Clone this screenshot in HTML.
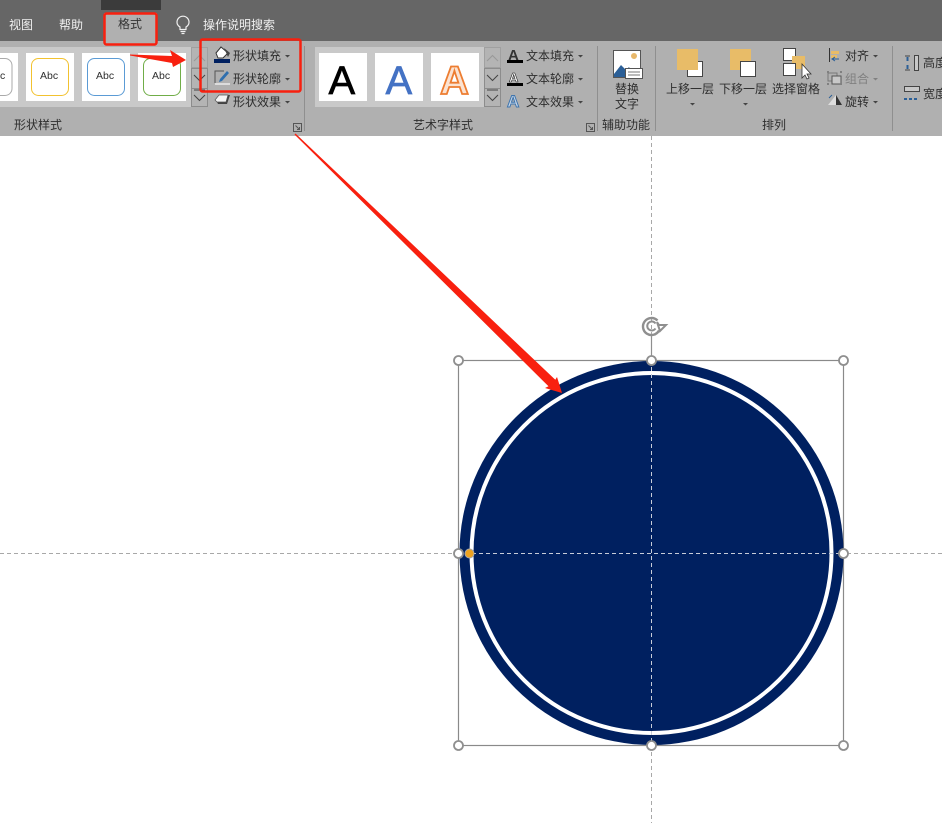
<!DOCTYPE html>
<html>
<head>
<meta charset="utf-8">
<style>
html,body{margin:0;padding:0;background:#fff;width:942px;height:823px;overflow:hidden}
svg{display:block}
text{font-family:"Liberation Sans","Noto Sans CJK SC",sans-serif;fill:#2e2e2e;font-size:12px}
</style>
</head>
<body>
<svg width="942" height="823" viewBox="0 0 942 823" xmlns="http://www.w3.org/2000/svg">
<rect width="942" height="823" fill="#fff"/>
<!-- tab bar -->
<rect width="942" height="41" fill="#666666"/>
<rect x="101" y="0" width="60" height="10" fill="#3b3b3b"/>
<rect x="0" y="41" width="942" height="95" fill="#b0b0b0"/>
<rect x="104" y="13" width="53" height="31" fill="#b0b0b0"/>
<text x="9" y="29" style="fill:#f0f0f0">视图</text>
<text x="59" y="29" style="fill:#f0f0f0">帮助</text>
<text x="203" y="29" style="fill:#f0f0f0">操作说明搜索</text>
<text x="118" y="28" style="fill:#333">格式</text>
<!-- bulb -->
<path d="M180 29.500v-2.500c-2-1.200-3-2.800-3-4.800a6 6 0 0 1 12 0c0 2-1 3.600-3 4.800v2.500z" fill="none" stroke="#f0f0f0" stroke-width="1.200"/>
<path d="M180.500 31.500h5M181.500 33.500h3" stroke="#f0f0f0" stroke-width="1.200"/>

<!-- shape gallery -->
<rect x="0" y="47" width="191" height="60" fill="#c9c9c9"/>
<rect x="0" y="53" width="18" height="48" fill="#fff"/>
<rect x="26" y="53" width="48" height="48" fill="#fff"/>
<rect x="82" y="53" width="48" height="48" fill="#fff"/>
<rect x="138" y="53" width="48" height="48" fill="#fff"/>
<rect x="-20" y="58.500" width="32" height="37" rx="7" fill="#fff" stroke="#aaa"/>
<rect x="31.500" y="58.500" width="37" height="37" rx="7" fill="#fff" stroke="#f2c230"/>
<rect x="87.500" y="58.500" width="37" height="37" rx="7" fill="#fff" stroke="#5b9bd5"/>
<rect x="143.500" y="58.500" width="37" height="37" rx="7" fill="#fff" stroke="#70ad47"/>
<text x="0" y="79" style="font-size:10.500px">c</text>
<text x="40" y="79" style="font-size:10.500px">Abc</text>
<text x="96" y="79" style="font-size:10.500px">Abc</text>
<text x="152" y="79" style="font-size:10.500px">Abc</text>
<!-- gallery scroll -->
<g fill="#b4b4b4" stroke="#8c8c8c">
<rect x="191.500" y="47.500" width="16" height="20" fill="#b4b4b4" stroke="#a0a0a0"/>
<rect x="191.500" y="68.500" width="16" height="20"/>
<rect x="191.500" y="88.500" width="16" height="18"/>
</g>
<path d="M194 61l5.500-5.500 5.500 5.500" fill="none" stroke="#999" stroke-width="1"/>
<path d="M194 75l5.500 5.500 5.500-5.500M194 95l5.500 5.500 5.500-5.500M194 90h11" fill="none" stroke="#444" stroke-width="1"/>
<!-- shape commands -->
<path d="M216 53l5-6 7 6-5 5h-5z" fill="#fff" stroke="#333"/>
<path d="M224 48l6 5-2 4z" fill="#444"/>
<rect x="214" y="59" width="16" height="4" fill="#002060"/>
<path d="M224 71h-9v12" fill="none" stroke="#555"/>
<path d="M219 82l1-3 7-8 2 2-7 8z" fill="#2f6fae"/>
<rect x="215" y="83" width="15" height="2" fill="#dcdcdc"/>
<path d="M216 100l4-5h10l-3 9h-9z" fill="#444"/>
<path d="M215 100l4-5h9l-2 7h-9z" fill="#f5f5f5" stroke="#555" stroke-width=".7"/>
<text x="233" y="60">形状填充</text>
<text x="233" y="83">形状轮廓</text>
<text x="233" y="106">形状效果</text>
<path d="M285 55h5l-2.500 2.500zM285 78h5l-2.500 2.500zM285 101h5l-2.500 2.500z" fill="#444"/>
<text x="14" y="129">形状样式</text>
<path d="M293.500 123.500h8v8h-8z M295.500 125.500l4 4M299.500 127v2.500H297" fill="none" stroke="#555" stroke-width="1"/>
<path d="M304.500 46v85" stroke="#8f8f8f"/>

<!-- WordArt gallery -->
<rect x="315" y="47" width="169" height="60" fill="#c9c9c9"/>
<rect x="319" y="53" width="48" height="48" fill="#fff"/>
<rect x="375" y="53" width="48" height="48" fill="#fff"/>
<rect x="431" y="53" width="48" height="48" fill="#fff"/>
<text x="328.500" y="94" style="font-size:40px;fill:#000;stroke:#000;stroke-width:.7px">A</text>
<text x="385.500" y="94" style="font-size:40px;fill:#4472c4;stroke:#4472c4;stroke-width:.7px">A</text>
<text x="440" y="94" style="font-size:40px;fill:#fbe3d2;stroke:#ed7d31;stroke-width:1.800px;font-weight:bold">A</text>
<g stroke="#8c8c8c" fill="#b4b4b4">
<rect x="484.500" y="47.500" width="16" height="20" fill="#b4b4b4" stroke="#a0a0a0"/>
<rect x="484.500" y="68.500" width="16" height="20"/>
<rect x="484.500" y="88.500" width="16" height="18"/>
</g>
<path d="M487 61l5.500-5.500 5.500 5.500" fill="none" stroke="#999"/>
<path d="M487 75l5.500 5.500 5.500-5.500M487 95l5.500 5.500 5.500-5.500M487 90h11" fill="none" stroke="#444"/>
<!-- text commands -->
<text x="508" y="60" style="font-size:15px;font-weight:bold;fill:#333">A</text>
<rect x="507" y="60" width="16" height="3" fill="#000"/>
<text x="509" y="82" style="font-size:13px;font-weight:bold;fill:#fff;stroke:#222;stroke-width:.6px">A</text>
<rect x="507" y="83" width="16" height="3" fill="#000"/>
<text x="507" y="107" style="font-size:17px;font-weight:bold;fill:#c7d6e8;stroke:#3f75ad;stroke-width:1px">A</text>
<text x="526" y="60">文本填充</text>
<text x="526" y="83">文本轮廓</text>
<text x="526" y="106">文本效果</text>
<path d="M578 55h5l-2.500 2.500zM578 78h5l-2.500 2.500zM578 101h5l-2.500 2.500z" fill="#444"/>
<text x="413" y="129">艺术字样式</text>
<path d="M586.500 123.500h8v8h-8z M588.500 125.500l4 4M592.500 127v2.500H590" fill="none" stroke="#555"/>
<path d="M597.500 46v85" stroke="#8f8f8f"/>

<!-- alt text -->
<rect x="613.500" y="50.500" width="27" height="27" fill="#fff" stroke="#555"/>
<circle cx="634" cy="56" r="3" fill="#e8b86b"/>
<path d="M614 74l7-9 5 5 3-3 6 10h-21z" fill="#2b5f97"/>
<rect x="625.500" y="68.500" width="17" height="10" fill="#fff" stroke="#555"/>
<path d="M628 72h12M628 75h12" stroke="#777"/>
<text x="615" y="93">替换</text>
<text x="615" y="108">文字</text>
<text x="602" y="129">辅助功能</text>
<path d="M655.500 46v85" stroke="#8f8f8f"/>

<!-- arrange -->
<rect x="687.500" y="61.500" width="15" height="15" fill="#fff" stroke="#444"/>
<rect x="677" y="49" width="21" height="21" fill="#e8bc68"/>
<text x="666" y="93">上移一层</text>
<path d="M690 103h5l-2.500 2.500z" fill="#444"/>
<rect x="730" y="49" width="21" height="21" fill="#e8bc68"/>
<rect x="740.500" y="61.500" width="15" height="15" fill="#fff" stroke="#444"/>
<text x="719" y="93">下移一层</text>
<path d="M743 103h5l-2.500 2.500z" fill="#444"/>
<rect x="783.500" y="48.500" width="12" height="12" fill="#fff" stroke="#444"/>
<rect x="792" y="56" width="13" height="13" fill="#e8bc68"/>
<rect x="783.500" y="63.500" width="12" height="12" fill="#fff" stroke="#444"/>
<path d="M802 64v14l3-3 2 4 2-1-2-4h4z" fill="#fff" stroke="#333" stroke-width=".8"/>
<text x="772" y="93">选择窗格</text>
<path d="M829.500 48v14" stroke="#333"/>
<rect x="831" y="51" width="8" height="3" fill="#e8bc68"/>
<rect x="831" y="55" width="6" height="3" fill="#e8bc68"/>
<path d="M839 59h-7m3-2l-3 2 3 2" fill="none" stroke="#2b5f97"/>
<text x="845" y="60">对齐</text>
<path d="M873 55h5l-2.500 2.500z" fill="#444"/>
<rect x="828" y="73" width="9" height="8" fill="none" stroke="#777"/>
<rect x="832" y="76" width="9" height="8" fill="#c8c8c8" stroke="#555"/>
<path d="M827 71h2v2h-2zM840 71h2v2h-2zM827 83h2v2h-2zM840 83h2v2h-2z" fill="#808080"/>
<text x="845" y="83" style="fill:#808080">组合</text>
<path d="M873 78h5l-2.500 2.500z" fill="#808080"/>
<path d="M836 95v10h-8z" fill="#ddd"/>
<path d="M836 95l6 10h-6z" fill="#333"/>
<path d="M829 98l3-3" stroke="#2b5f97"/>
<text x="845" y="106">旋转</text>
<path d="M873 101h5l-2.500 2.500z" fill="#444"/>
<text x="762" y="129">排列</text>
<path d="M892.500 46v85" stroke="#8f8f8f"/>
<!-- size -->
<path d="M905 56h5M905 70h5" stroke="#444"/>
<path d="M907.500 57v4M907.500 65v4" stroke="#2b5f97" stroke-width="2"/>
<rect x="914.500" y="55.500" width="4" height="15" fill="#c8c8c8" stroke="#444"/>
<text x="923" y="67">高度</text>
<rect x="904.500" y="86.500" width="15" height="5" fill="#c8c8c8" stroke="#444"/>
<path d="M904 99h15" stroke="#2b5f97" stroke-width="2" stroke-dasharray="3 2"/>
<text x="923" y="98">宽度</text>

<!-- guides -->
<path d="M651.500 136V823" stroke="#a8a8a8" stroke-dasharray="4 3"/>
<path d="M0 553.500H942" stroke="#a8a8a8" stroke-dasharray="4 3"/>

<!-- selection box -->
<rect x="458.500" y="360.500" width="385" height="385" fill="none" stroke="#8a8a8a" stroke-width="1.200"/>
<!-- circle -->
<circle cx="651.500" cy="553" r="192" fill="#002060"/>
<circle cx="651.500" cy="553" r="180" fill="#002060" stroke="#fff" stroke-width="4"/>
<path d="M651.500 360V745M458 553.500H845" stroke="#c8ccd8" stroke-width="1" stroke-dasharray="4 3"/>
<!-- handles -->
<g fill="#fff" stroke="#8f8f8f" stroke-width="1.800">
<circle cx="458.500" cy="360.500" r="4.500"/>
<circle cx="651.500" cy="360.500" r="4.500"/>
<circle cx="843.500" cy="360.500" r="4.500"/>
<circle cx="458.500" cy="553.500" r="4.500"/>
<circle cx="843.500" cy="553.500" r="4.500"/>
<circle cx="458.500" cy="745.500" r="4.500"/>
<circle cx="651.500" cy="745.500" r="4.500"/>
<circle cx="843.500" cy="745.500" r="4.500"/>
</g>
<circle cx="469.500" cy="553.500" r="4.500" fill="#eea320" stroke="#aaa" stroke-width="1"/>
<!-- rotate handle -->
<path d="M651.500 336v20" stroke="#8f8f8f" stroke-width="1.200"/>
<path d="M657.500 320.500a8.500 8.500 0 1 0 1.500 10" fill="none" stroke="#8f8f8f" stroke-width="2.400"/>
<path d="M655.500 323.500a4.500 4.500 0 1 0 0 5" fill="none" stroke="#8f8f8f" stroke-width="2"/>
<path d="M657 322l2 3h7l-6 6z" fill="#fff" stroke="#8f8f8f" stroke-width="2"/>

<!-- red annotations -->
<rect x="104.500" y="13.500" width="52" height="31" rx="2" fill="none" stroke="#f8200f" stroke-width="2.500"/>
<rect x="200.500" y="39.500" width="100" height="52" rx="2" fill="none" stroke="#f8200f" stroke-width="2.500"/>
<path d="M130 54.500L172 56l-2-6 16 10-13 7-1-4-42-7.500z" fill="#f8200f"/>
<path d="M295.500 133.500L555.300 379.700 557 377 562 393 545 388 548.500 386.300 294.500 134.500z" fill="#f8200f"/>
</svg>
</body>
</html>
